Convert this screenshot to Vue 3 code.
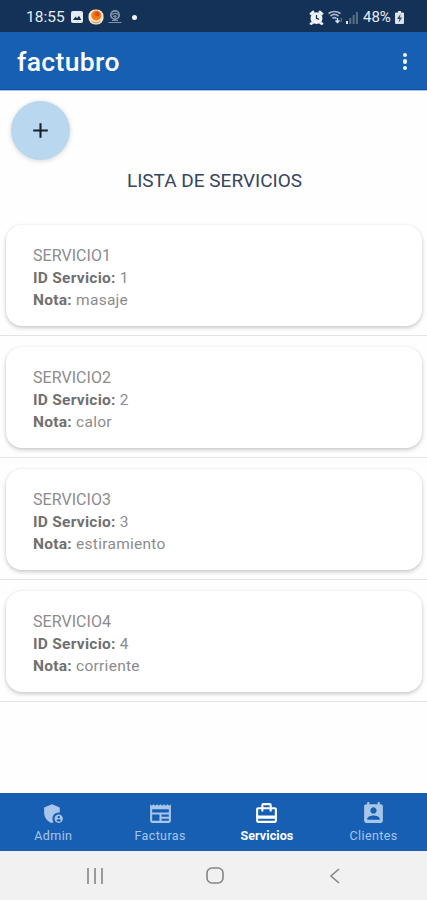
<template>
  <div class="pantalla">
    <div class="status-bar">
      <span class="hora">18:55</span>
      <svg class="ico-imagen" viewBox="0 0 12 12">
        <rect width="12" height="12" rx="2" fill="#e6ebf1" />
        <path d="M2 9l2.5-3.5L6 7.3 8 4.8 10.3 9z" fill="#143257" />
      </svg>
      <svg class="ico-app" viewBox="0 0 16 16">
        <rect x="0.5" y="0.5" width="15" height="15" rx="6.5" fill="#f6e8dc" />
        <circle cx="8.3" cy="6.5" r="5" fill="#f47a16" />
        <circle cx="9.2" cy="5.2" r="2.4" fill="#dc4d10" />
        <path d="M2.5 11c3 2.5 8 2.5 11 0-1 2.5-3 3.5-5.5 3.5S3.500 13.500 2.500 11z" fill="#eda04c" />
      </svg>
      <svg class="ico-red" viewBox="0 0 14 14" fill="none" stroke="#8092a8">
        <circle cx="7" cy="5" r="4.200" stroke-width="1.800" />
        <path d="M4 4.500c2-1.500 4-1.500 6 0M5 6.500c1.500-1 2.500-1 4 0M7 6v5M0.500 12.500h13M4 10.500h6" stroke-width="1.200" />
      </svg>
      <span class="punto"></span>
      <span class="espacio"></span>
      <svg class="ico-alarma" viewBox="0 0 24 24" fill="#f0f3f6">
        <path d="M22 5.720l-4.600-3.860-1.290 1.530 4.600 3.860L22 5.720zM7.880 3.390L6.600 1.860 2 5.710l1.290 1.530 4.590-3.850zM4 20l-2 2 2 1 2.500-2zM20 20l2 2-2 1-2.500-2z" stroke="#f0f3f6" stroke-width="2" />
        <circle cx="12" cy="13" r="9.500" />
        <path d="M12 8v5.500l4 1.500" fill="none" stroke="#143257" stroke-width="2" />
      </svg>
      <svg class="ico-wifi" viewBox="0 0 15 14" fill="none" stroke="#a9b5c4" stroke-width="1.700">
        <path d="M0.500 3.500c3.500-2.500 8.500-2.500 12 0M2.500 6c2.500-2 5.500-2 8 0M4.500 8.300c1.200-1 2.500-1 4 0" />
        <path d="M9.500 8v4.500M7.500 10.500l2 2 2-2" stroke="#dfe5eb" stroke-width="1.400" />
        <path d="M13.300 12V8" stroke="#5a6f88" stroke-width="1.400" />
      </svg>
      <svg class="ico-senal" viewBox="0 0 12 13">
        <rect x="0" y="10" width="2" height="3" fill="#e1e6ed" />
        <rect x="3.300" y="7" width="2" height="6" fill="#5a6f88" />
        <rect x="6.600" y="4" width="2" height="9" fill="#5a6f88" />
        <rect x="9.900" y="1" width="2" height="12" fill="#5a6f88" />
      </svg>
      <span class="bateria">48%</span>
      <svg class="ico-bateria" viewBox="0 0 9 13">
        <path d="M3 0h3v1.500h2q1 0 1 1V12q0 1-1 1H1q-1 0-1-1V2.500q0-1 1-1h2z" fill="#dce2e9" />
        <path d="M5.500 3L2 8h2.300L3.700 11.500 7.200 6.500H5z" fill="#33506f" />
      </svg>
    </div>

    <header class="app-bar">
      <h1>factubro</h1>
      <button class="menu" aria-label="Menú">
        <span></span>
        <span></span>
        <span></span>
      </button>
    </header>

    <main class="contenido">
      <button class="fab" aria-label="Añadir">
        <svg viewBox="0 0 24 24"><path d="M19 13h-6v6h-2v-6H5v-2h6V5h2v6h6v2z" /></svg>
      </button>
      <h2>LISTA DE SERVICIOS</h2>

      <ul class="lista">
        <li v-for="servicio in servicios" :key="servicio.id">
          <div class="servicio-card">
            <p class="nombre">{{ servicio.nombre }}</p>
            <p><strong>ID Servicio:</strong> {{ servicio.id }}</p>
            <p><strong>Nota:</strong> {{ servicio.nota }}</p>
          </div>
        </li>
      </ul>
    </main>

    <nav class="tabs">
      <button
        v-for="tab in tabs"
        :key="tab.label"
        class="tab"
        :class="{ activa: tab.label === tabActiva }"
        @click="tabActiva = tab.label"
      >
        <svg viewBox="0 0 24 24"><path :d="tab.icono" /></svg>
        <span>{{ tab.label }}</span>
      </button>
    </nav>

    <div class="nav-sistema">
      <svg viewBox="0 0 20 20"><path d="M3 2v16M10 2v16M17 2v16" /></svg>
      <svg viewBox="0 0 20 20"><rect x="2" y="2" width="16" height="15" rx="5" /></svg>
      <svg viewBox="0 0 20 20"><path d="M14 3l-8 7 8 7" /></svg>
    </div>
  </div>
</template>

<script setup>
import { ref } from 'vue'

const servicios = [
  { id: 1, nombre: 'SERVICIO1', nota: 'masaje' },
  { id: 2, nombre: 'SERVICIO2', nota: 'calor' },
  { id: 3, nombre: 'SERVICIO3', nota: 'estiramiento' },
  { id: 4, nombre: 'SERVICIO4', nota: 'corriente' }
]

const tabActiva = ref('Servicios')

const tabs = [
  {
    label: 'Admin',
    icono: 'M17 11c.34 0 .67.04 1 .09V6.27L10.5 3 3 6.27v4.91c0 4.54 3.2 8.79 7.5 9.82.55-.13 1.08-.32 1.6-.55-.69-.98-1.1-2.17-1.1-3.45 0-3.31 2.69-6 6-6zM17 13c-2.21 0-4 1.79-4 4s1.79 4 4 4 4-1.79 4-4-1.79-4-4-4zm0 1.38c.62 0 1.12.51 1.12 1.12s-.51 1.12-1.12 1.12-1.12-.51-1.12-1.12.5-1.12 1.12-1.12zm0 5.37c-.93 0-1.74-.46-2.24-1.17.05-.72 1.51-1.08 2.24-1.08s2.19.36 2.24 1.08c-.5.71-1.31 1.17-2.24 1.17z'
  },
  {
    label: 'Facturas',
    icono: 'M22 3l-1.67 1.67L18.67 3 17 4.67 15.33 3l-1.66 1.67L12 3l-1.67 1.67L8.67 3 7 4.67 5.33 3 3.67 4.67 2 3v16c0 1.1.9 2 2 2h16c1.1 0 2-.9 2-2V3zM11 19H4v-6h7v6zm9 0h-7v-2h7v2zm0-4h-7v-2h7v2zm0-4H4V8h16v3z'
  },
  {
    label: 'Servicios',
    icono: 'M20 6h-3V4c0-1.11-.89-2-2-2H9c-1.11 0-2 .89-2 2v2H4c-1.11 0-2 .89-2 2v11c0 1.11.89 2 2 2h16c1.11 0 2-.89 2-2V8c0-1.11-.89-2-2-2zM9 4h6v2H9V4zm11 15H4v-2h16v2zm0-5H4V8h3v2h2V8h6v2h2V8h3v6z'
  },
  {
    label: 'Clientes',
    icono: 'M19 3h-1V1h-2v2H8V1H6v2H5c-1.11 0-2 .9-2 2v14c0 1.1.89 2 2 2h14c1.1 0 2-.9 2-2V5c0-1.1-.9-2-2-2zm-7 3c1.66 0 3 1.34 3 3s-1.34 3-3 3-3-1.34-3-3 1.34-3 3-3zm6 12H6v-1c0-2 4-3.1 6-3.1s6 1.1 6 3.1v1z'
  }
]
</script>

<style>
body {
  margin: 0;
}
</style>

<style scoped>
.pantalla {
  display: flex;
  flex-direction: column;
  height: 900px;
  background: #fefefe;
  font-family: Roboto, sans-serif;
  overflow: hidden;
}

button {
  padding: 0;
  border: none;
  font-family: inherit;
  cursor: pointer;
}

.status-bar {
  display: flex;
  align-items: center;
  box-sizing: border-box;
  height: 32px;
  padding: 2px 23px 0 26px;
  background: #143257;
  color: #e8edf2;
}

.hora {
  width: 45px;
  font-size: 15.5px;
}

.ico-imagen {
  width: 12px;
  height: 12px;
}

.ico-app {
  width: 16px;
  height: 16px;
  margin-left: 5px;
}

.ico-red {
  width: 14px;
  height: 14px;
  margin-left: 4px;
}

.punto {
  width: 5px;
  height: 5px;
  margin-left: 10px;
  border-radius: 50%;
  background: #f0f3f6;
}

.espacio {
  flex: 1;
}

.ico-alarma {
  width: 15px;
  height: 15px;
}

.ico-wifi {
  width: 15px;
  height: 14px;
  margin-left: 4px;
}

.ico-senal {
  width: 12px;
  height: 13px;
  margin-left: 3px;
}

.bateria {
  width: 30px;
  margin-left: 5px;
  font-size: 15px;
}

.ico-bateria {
  width: 9px;
  height: 13px;
  margin-left: 2px;
}

.app-bar {
  display: flex;
  align-items: center;
  justify-content: space-between;
  box-sizing: border-box;
  height: 58px;
  padding: 2px 20px 0 17px;
  background: #175fb3;
  border-bottom: 1px solid #0f4fa5;
  box-shadow: 0 1px 0 #a5c3ea;
  color: #fff;
}

.app-bar h1 {
  margin: 0;
  font-size: 26.5px;
  font-weight: 500;
  letter-spacing: 0.35px;
}

.menu {
  display: flex;
  flex-direction: column;
  gap: 2px;
  background: none;
}

.menu span {
  width: 4.5px;
  height: 4.5px;
  border-radius: 50%;
  background: #f3f7fc;
}

.contenido {
  flex: 1;
}

.fab {
  display: flex;
  align-items: center;
  justify-content: center;
  width: 59px;
  height: 59px;
  margin: 11px 0 0 10.5px;
  border-radius: 50%;
  background: #b9d8f0;
  box-shadow: 0 1px 5px rgba(0, 0, 0, 0.16);
}

.fab svg {
  width: 25px;
  height: 25px;
  fill: #14202a;
}

.contenido h2 {
  margin: 9px 0 21px;
  padding-left: 2px;
  text-align: center;
  font-size: 19px;
  line-height: 24px;
  font-weight: 400;
  color: #364560;
}

.lista {
  margin: 0;
  padding: 0;
  list-style: none;
}

.lista li {
  box-sizing: border-box;
  height: 122px;
  padding: 11px 5px 9px 6px;
  border-bottom: 1px solid #e3e3e3;
}

.servicio-card {
  box-sizing: border-box;
  height: 101px;
  padding: 20px 27px;
  border-radius: 16px;
  background: #fff;
  box-shadow: 0 2px 4px rgba(0, 0, 0, 0.2), 0 0 3px rgba(0, 0, 0, 0.06);
  color: #8c8c8c;
}

.servicio-card p {
  margin: 0;
  font-size: 15.5px;
  line-height: 22px;
  letter-spacing: 0.27px;
}

.servicio-card .nombre {
  font-size: 16px;
  letter-spacing: 0.05px;
}

.servicio-card strong {
  font-weight: 700;
  color: #707070;
}

.tabs {
  display: flex;
  height: 58px;
  background: #175fb3;
}

.tab {
  flex: 1;
  display: flex;
  flex-direction: column;
  align-items: center;
  padding-top: 8px;
  background: none;
  color: #a8c6ea;
}

.tab svg {
  width: 25px;
  height: 25px;
  fill: currentColor;
}

.tab span {
  margin-top: 2px;
  font-size: 12.5px;
  line-height: 16px;
  letter-spacing: 0.4px;
}

.tab.activa {
  color: #fff;
}

.tab.activa span {
  font-weight: 700;
  letter-spacing: 0.1px;
}

.nav-sistema {
  display: flex;
  align-items: center;
  justify-content: center;
  gap: 100px;
  height: 49px;
  padding-left: 3px;
  background: #f1f1f1;
}

.nav-sistema svg {
  width: 20px;
  height: 20px;
  fill: none;
  stroke: #858585;
  stroke-width: 1.6;
}
</style>
